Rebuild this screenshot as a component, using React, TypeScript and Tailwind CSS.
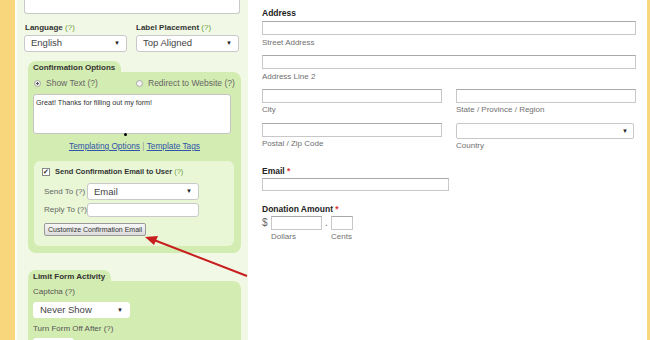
import { ReactNode } from "react";

const font = "font-['Liberation_Sans','DejaVu_Sans',sans-serif]";

function Q() {
  return <span className="font-normal text-[#6b9e3a]">(?)</span>;
}

function Select({ value, className }: { value: string; className: string }) {
  return (
    <div
      className={`flex items-center justify-between rounded-[3px] border border-[#c9c9c9] bg-white pl-[6px] pr-[6px] text-[9.5px] text-[#444] ${className}`}
    >
      <span>{value}</span>
      <span className="text-[6px] text-[#222]">▼</span>
    </div>
  );
}

function Field({ className }: { className: string }) {
  return <div className={`border border-[#c8c8c8] border-t-[#a9a9a9] bg-white ${className}`} />;
}

function Sub({ children, className = "" }: { children: ReactNode; className?: string }) {
  return <div className={`whitespace-nowrap text-[8px] leading-[10px] text-[#707070] ${className}`}>{children}</div>;
}

function Group({ title, children, className = "" }: { title: string; children: ReactNode; className?: string }) {
  return (
    <div className={`ml-[11px] w-[213px] ${className}`}>
      <div className="h-[11px] w-fit rounded-t-[8px] bg-[#d3ecb1] pl-[5px] pr-[6px] pt-[2px] text-[8px] font-bold leading-[10px] text-[#333]">
        {title}
      </div>
      <div className="rounded-b-[8px] rounded-tr-[8px] bg-[#d3ecb1]">{children}</div>
    </div>
  );
}

function Sidebar() {
  return (
    <div className="relative w-[233px] shrink-0 whitespace-nowrap border-l-[2px] border-[#fbfdf7] bg-[#f1f9e6]">
      <div className="ml-[7px] h-[14px] w-[216px] rounded-b-[3px] border border-t-0 border-[#c9c9c9] bg-white" />
      <div className="mt-[8px] flex pl-[8px] text-[8px] font-bold leading-[11px] text-[#333]">
        <div className="w-[111px]">
          Language <Q />
        </div>
        <div>
          Label Placement <Q />
        </div>
      </div>
      <div className="mt-[2px] flex pl-[7px]">
        <Select value="English" className="h-[17px] w-[103px]" />
        <Select value="Top Aligned" className="ml-[9px] h-[17px] w-[103px]" />
      </div>
      <Group title="Confirmation Options" className="mt-[9px]">
        <div className="flex h-[22px] items-center text-[8.5px] text-[#666]">
          <span className="ml-[6px] mr-[5px] h-[7px] w-[7px] rounded-full border border-[#aaa] bg-[radial-gradient(circle,#555_30%,#eee_40%)]" />
          <span className="w-[90px]">Show Text (?)</span>
          <span className="mr-[5px] h-[7px] w-[7px] rounded-full border border-[#aaa] bg-[#f4f4f4]" />
          <span>Redirect to Website (?)</span>
        </div>
        <div className="relative ml-[5px] h-[40px] w-[198px] rounded-[3px] border border-[#c4c4c4] bg-white px-[2px] pt-[3px] text-[7.2px] leading-[10px] text-[#333]">
          Great! Thanks for filling out my form!
          <span className="absolute bottom-[-3px] left-[90px] h-[3px] w-[3px] rounded-full bg-black" />
        </div>
        <div className="mt-[7px] text-center text-[8.3px] leading-[10px] text-[#2f54a8]">
          <span className="underline">Templating Options</span>
          <span className="text-[#999]"> | </span>
          <span className="underline">Template Tags</span>
        </div>
        <div className="ml-[6px] mt-[10px] h-[85px] w-[200px] rounded-[6px] bg-[#e9f7d7] pl-[8px] pt-[5px]">
          <div className="flex items-center text-[7.5px] font-bold text-[#333]">
            <span className="mr-[5px] flex h-[8px] w-[8px] items-center justify-center border border-[#888] bg-white text-[7px] leading-none">
              ✔
            </span>
            Send Confirmation Email to User&nbsp;<Q />
          </div>
          <div className="mt-[6px] flex items-center text-[8px] text-[#666]">
            <span className="w-[45px] pl-[2px]">Send To (?)</span>
            <Select value="Email" className="h-[17px] w-[112px] border-[#8fa8c8]" />
          </div>
          <div className="mt-[3px] flex items-center text-[8px] text-[#666]">
            <span className="w-[45px] pl-[2px]">Reply To (?)</span>
            <div className="h-[14px] w-[112px] rounded-[3px] border border-[#c9c9c9] bg-white" />
          </div>
          <div className="ml-[2px] mt-[6px] h-[13px] w-fit rounded-[2px] border border-[#999] bg-[linear-gradient(#f7f7f7,#dcdcdc)] px-[3px] text-[7px] leading-[11px] text-[#333]">
            Customize Confirmation Email
          </div>
        </div>
        <div className="h-[7px]" />
      </Group>
      <Group title="Limit Form Activity" className="mt-[17px]">
        <div className="pl-[5px] pt-[5px] text-[8px] text-[#555]">
          <div>Captcha (?)</div>
          <Select value="Never Show" className="mt-[4px] h-[16px] w-[97px] border-white" />
          <div className="mt-[5px]">Turn Form Off After (?)</div>
          <div className="mt-[3px] h-[14px] w-[41px] rounded-[3px] bg-white" />
        </div>
      </Group>
    </div>
  );
}

function Main() {
  return (
    <div className="w-[399px] shrink-0 bg-white pl-[14px] text-[#222]">
      <div className="mt-[7px] text-[8.5px] font-bold leading-[12px]">Address</div>
      <Field className="mt-[2px] h-[14px] w-[374px]" />
      <Sub className="mt-[3px]">Street Address</Sub>
      <Field className="mt-[7px] h-[14px] w-[374px]" />
      <Sub className="mt-[3px]">Address Line 2</Sub>
      <div className="mt-[7px] flex">
        <div className="w-[194px]">
          <Field className="h-[14px] w-[180px]" />
          <Sub className="mt-[2px]">City</Sub>
          <Field className="mt-[8px] h-[14px] w-[180px]" />
          <Sub className="mt-[2px]">Postal / Zip Code</Sub>
        </div>
        <div>
          <Field className="h-[14px] w-[180px]" />
          <Sub className="mt-[2px]">State / Province / Region</Sub>
          <div className="mt-[8px] flex h-[16px] w-[178px] items-center justify-end rounded-[2px] border border-[#c8c8c8] pr-[5px] text-[6px]">
            ▼
          </div>
          <Sub className="mt-[2px]">Country</Sub>
        </div>
      </div>
      <div className="mt-[14px] text-[8.5px] font-bold leading-[12px]">
        Email <span className="text-[#d33]">*</span>
      </div>
      <Field className="mt-[1px] h-[13px] w-[187px]" />
      <div className="mt-[12px] text-[8.5px] font-bold leading-[12px]">
        Donation Amount <span className="text-[#d33]">*</span>
      </div>
      <div className="flex h-[15px] items-center text-[10px] text-[#666]">
        <span className="w-[9px]">$</span>
        <Field className="h-[14px] w-[51px]" />
        <span className="w-[9px] text-center">.</span>
        <Field className="h-[14px] w-[22px]" />
      </div>
      <div className="mt-[2px] flex pl-[9px]">
        <Sub className="w-[60px]">Dollars</Sub>
        <Sub>Cents</Sub>
      </div>
    </div>
  );
}

export default function App() {
  return (
    <div className={`relative flex h-[340px] w-[650px] overflow-hidden bg-[#f8d67c] ${font}`}>
      <div className="w-[15px] shrink-0 bg-[#f8d67c]" />
      <Sidebar />
      <Main />
      <svg className="absolute left-0 top-0" width="650" height="340" viewBox="0 0 650 340">
        <line x1="247" y1="276" x2="154" y2="240" stroke="#c81e1e" strokeWidth="2" />
        <polygon points="145,237 158,236 154,245" fill="#c81e1e" />
      </svg>
    </div>
  );
}
